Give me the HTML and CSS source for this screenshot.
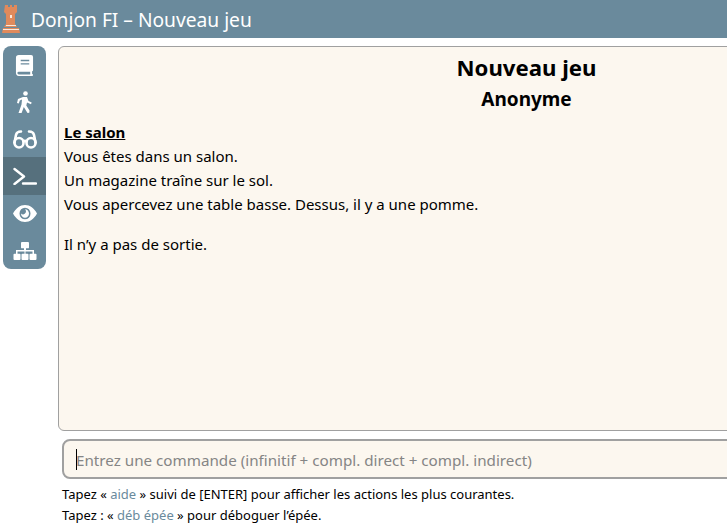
FILE: index.html
```html
<!DOCTYPE html>
<html lang="fr">
<head>
<meta charset="utf-8">
<title>Donjon FI – Nouveau jeu</title>
<link rel="stylesheet" href="styles.css">
</head>
<body>
<header class="topbar">
  <svg class="logo" viewBox="0 0 20 30" width="20" height="30">
    <path fill="#e08a5c" d="M4 1h3v2h2V1h2v2h2V1h3v7l-2 2v10l2 3H3l2-3V10L3 8z"/>
    <path fill="#e08a5c" d="M2 24h16l1 5H1z"/>
    <path fill="#fbe9dc" d="M9 11h2v3H9zM5 21h10v1H5zM2 25h16v1H2z"/>
  </svg>
  <span class="brand">Donjon FI – Nouveau jeu</span>
</header>
<div class="main">
  <nav class="sidebar">
    <div class="navitem">
      <svg viewBox="0 0 20 22" width="19" height="21"><path fill="#fff" fill-rule="evenodd" d="M4 0h13a2 2 0 0 1 2 2v14a1 1 0 0 1-1 1v3a1 1 0 0 1 0 2H4a3.500 3.500 0 0 1-3-3.500V3a3 3 0 0 1 3-3zM6 5v1.500h9V5zM6 8.500V10h9V8.500zM4 17.500a1.500 1.500 0 0 0 0 3h12v-3z"/></svg>
    </div>
    <div class="navitem">
      <svg viewBox="0 0 15 22" width="15" height="22"><g fill="#fff"><circle cx="8.500" cy="2.500" r="2.300"/><path d="M6 6h4l1.500 4 3.200 1.500-.7 1.700-4-1.700-.7 3 3.200 5-.2 2.300-1.800.2-3.700-6-2.200 6H1.500l3-8.500.5-5-2.200 1-1 3L0 12l1-4z"/></g></svg>
    </div>
    <div class="navitem">
      <svg viewBox="0 0 24 19" width="24" height="19" fill="none" stroke="#fff" stroke-width="2.600" stroke-linecap="round"><rect x="1.500" y="8" width="9" height="9.500" rx="4.500"/><rect x="13.500" y="8" width="9" height="9.500" rx="4.500"/><path d="M10.500 11.500q1.500-1.200 3 0M1.500 12.500 3 5q.7-3.500 5-3.500M22.500 12.500 21 5q-.7-3.500-5-3.500"/></svg>
    </div>
    <div class="navitem active">
      <svg viewBox="0 0 24 18" width="24" height="18" fill="none" stroke="#fff" stroke-width="2.400" stroke-linecap="round" stroke-linejoin="round"><path d="M1.500 2l9.500 7.500L1.500 17M10 16.500H23"/></svg>
    </div>
    <div class="navitem">
      <svg viewBox="0 0 24 16" width="24" height="17" preserveAspectRatio="none"><path fill="#fff" fill-rule="evenodd" d="M0 8C3 3 7 0 12 0s9 3 12 8c-3 5-7 8-12 8S3 13 0 8zm12-5.500a5.500 5.500 0 1 0 0 11 5.500 5.500 0 0 0 0-11z"/><path fill="#fff" d="M12 4a4 4 0 1 1-4 4 2.500 2.500 0 0 0 4-4z"/></svg>
    </div>
    <div class="navitem">
      <svg viewBox="0 0 24 20" width="24" height="18" preserveAspectRatio="none"><path fill="#fff" d="M9 0h6a1 1 0 0 1 1 1v5a1 1 0 0 1-1 1h-2v2h8v4h1.500a1 1 0 0 1 1 1v5a1 1 0 0 1-1 1h-5a1 1 0 0 1-1-1v-5a1 1 0 0 1 1-1h2v-2.500h-7V13h2a1 1 0 0 1 1 1v5a1 1 0 0 1-1 1H9.500a1 1 0 0 1-1-1v-5a1 1 0 0 1 1-1h2v-2.500h-7V13h2a1 1 0 0 1 1 1v5a1 1 0 0 1-1 1h-5a1 1 0 0 1-1-1v-5a1 1 0 0 1 1-1H3V9h8V7H9a1 1 0 0 1-1-1V1a1 1 0 0 1 1-1z"/></svg>
    </div>
  </nav>
  <main class="content">
    <section class="story">
      <h1 class="title">Nouveau jeu</h1>
      <h2 class="author">Anonyme</h2>
      <p class="line"><strong class="room">Le salon</strong></p>
      <p class="line">Vous êtes dans un salon.</p>
      <p class="line">Un magazine traîne sur le sol.</p>
      <p class="line">Vous apercevez une table basse. Dessus, il y a une pomme.</p>
      <p class="line gap">Il n’y a pas de sortie.</p>
    </section>
    <div class="command"><span class="caret"></span><span class="placeholder">Entrez une commande (infinitif + compl. direct + compl. indirect)</span></div>
    <p class="hint">Tapez « <span class="kw">aide</span> » suivi de [ENTER] pour afficher les actions les plus courantes.</p>
    <p class="hint">Tapez : « <span class="kw">déb épée</span> » pour déboguer l’épée.</p>
  </main>
</div>
</body>
</html>
```
FILE: styles.css
```css
html, body { margin: 0; padding: 0; height: 100%; overflow: hidden; }
body { font-family: "Noto Sans", "Open Sans", sans-serif; color: #000; background: #fff; }
.topbar { height: 38px; background: #6a8a9c; display: flex; align-items: center; padding-left: 1px; box-sizing: border-box; }
.logo { flex: none; }
.brand { margin-left: 10px; color: #fff; font-size: 19.200px; }
.main { display: flex; align-items: flex-start; padding: 8px 0 0 3px; }
.sidebar { flex: none; width: 43px; height: 223px; box-sizing: border-box; padding-top: 1px; background: #6a8a9c; border-radius: 8px; display: flex; flex-direction: column; overflow: hidden; }
.navitem { height: 37px; display: flex; align-items: center; justify-content: center; }
.navitem.active { background: #56707d; height: 38px; }
.content { flex: none; width: 937px; margin-left: 12px; }
.story { height: 385px; box-sizing: border-box; background: #fcf7ef; border: 1px solid #a0a0a0; border-radius: 6px; padding: 4px 5px; }
.title { margin: 0; font-size: 22.200px; line-height: 34px; text-align: center; font-weight: 700; }
.author { margin: 0 0 7px; font-size: 19px; line-height: 28px; text-align: center; font-weight: 700; }
.line { margin: 0; font-size: 15px; line-height: 24px; }
.line.gap { margin-top: 16px; }
.room { text-decoration: underline; }
.command { height: 40px; margin-top: 8px; margin-left: 4px; box-sizing: border-box; background: #fcf7ef; border: 2px solid #a0a0a0; border-radius: 8px; display: flex; align-items: center; padding-left: 12px; padding-top: 1px; font-size: 15.200px; }
.caret { width: 1px; height: 21px; background: #000; flex: none; margin-right: -1px; }
.placeholder { color: #858585; }
.hint { margin: 0 0 0 4px; font-size: 13px; line-height: 21px; }
.command + .hint { margin-top: 5px; }
.kw { color: #6a8a9c; }
```
